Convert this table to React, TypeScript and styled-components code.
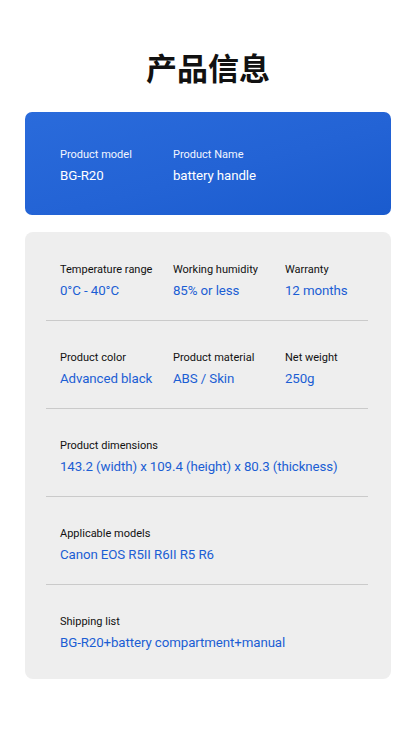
import styled, { createGlobalStyle } from "styled-components";

const GlobalStyle = createGlobalStyle`
  html, body {
    margin: 0;
    padding: 0;
    background: #ffffff;
  }
  body {
    font-family: Roboto, "Noto Sans CJK SC", sans-serif;
  }
`;

type Spec = { label: string; value: string };

const specRows: Spec[][] = [
  [
    { label: "Temperature range", value: "0°C - 40°C" },
    { label: "Working humidity", value: "85% or less" },
    { label: "Warranty", value: "12 months" },
  ],
  [
    { label: "Product color", value: "Advanced black" },
    { label: "Product material", value: "ABS / Skin" },
    { label: "Net weight", value: "250g" },
  ],
  [{ label: "Product dimensions", value: "143.2 (width) x 109.4 (height) x 80.3 (thickness)" }],
  [{ label: "Applicable models", value: "Canon EOS R5II R6II R5 R6" }],
  [{ label: "Shipping list", value: "BG-R20+battery compartment+manual" }],
];

const App = () => {
  return (
    <Page>
      <GlobalStyle />
      <Title>产品信息</Title>

      <HeroCard>
        <Field>
          <Label $light>Product model</Label>
          <Value $light>BG-R20</Value>
        </Field>
        <Field>
          <Label $light>Product Name</Label>
          <Value $light>battery handle</Value>
        </Field>
      </HeroCard>

      <SpecCard>
        {specRows.map((row, i) => (
          <SpecRow key={i} $last={i === specRows.length - 1}>
            {row.map((s) => (
              <Field key={s.label}>
                <Label>{s.label}</Label>
                <Value>{s.value}</Value>
              </Field>
            ))}
          </SpecRow>
        ))}
      </SpecCard>
    </Page>
  );
};

export default App;

const Page = styled.div`
  width: 416px;
  min-height: 730px;
  box-sizing: border-box;
  padding: 43px 25px 0;
`;

const Title = styled.h1`
  margin: 0;
  height: 48px;
  line-height: 48px;
  text-align: center;
  font-family: "Noto Sans CJK SC", sans-serif;
  font-size: 31px;
  font-weight: 700;
  color: #111111;
`;

const HeroCard = styled.div`
  margin-top: 21px;
  height: 103px;
  box-sizing: border-box;
  padding: 35px 0 0 35px;
  border-radius: 7px;
  background: linear-gradient(165deg, #2a6bdb 0%, #2363d5 55%, #1a5bce 100%);
  display: grid;
  grid-template-columns: 113px 113px;
`;

const SpecCard = styled.div`
  margin-top: 17px;
  border-radius: 8px;
  background: #eeeeee;
  padding: 1px 23px 0 21px;
`;

const SpecRow = styled.div<{ $last?: boolean }>`
  height: ${(p) => (p.$last ? "94px" : "88px")};
  box-sizing: border-box;
  padding: 29px 0 0 14px;
  border-bottom: ${(p) => (p.$last ? "none" : "1px solid #cacaca")};
  display: grid;
  grid-template-columns: 113px 112px 1fr;
  align-content: start;
`;

const Field = styled.div`
  display: flex;
  flex-direction: column;
  gap: 3px;
  white-space: nowrap;
`;

const Label = styled.div<{ $light?: boolean }>`
  font-size: 11px;
  line-height: 16px;
  color: ${(p) => (p.$light ? "#f2f6ff" : "#111111")};
`;

const Value = styled.div<{ $light?: boolean }>`
  font-size: 13.3px;
  line-height: 20px;
  letter-spacing: -0.1px;
  color: ${(p) => (p.$light ? "#ffffff" : "#1b5ed4")};
`;
